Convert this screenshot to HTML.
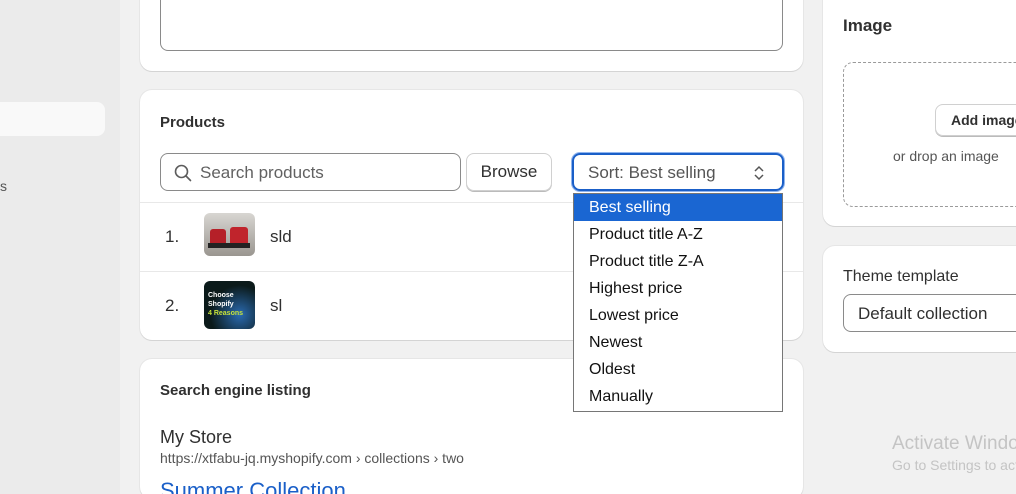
<!DOCTYPE html>
<html style="width:1016px;height:494px;overflow:hidden"><head><style>
*{box-sizing:border-box;margin:0;padding:0}
body{width:1016px;height:494px;overflow:hidden;background:#f1f1f1;font-family:"Liberation Sans",sans-serif;color:#303030;position:relative}
.side{position:absolute;left:0;top:0;width:120px;height:494px;background:#ebebeb}
.card{position:absolute;background:#fff;border-radius:12px;box-shadow:0 1px 0 #d4d4d4,0 0 0 1px #e6e6e6}
.abs{position:absolute}
</style></head><body>
<div class="side">
<div class="abs" style="left:0;top:102px;width:105px;height:34px;background:#f9f9f9;border-radius:0 8px 8px 0"></div>
<div class="abs" style="left:0;top:178px;font-size:14px;color:#555">s</div>
</div>
<div class="card" style="left:140px;top:-12px;width:663px;height:83px">
<div class="abs" style="left:20px;top:0;width:623px;height:63px;border:1px solid #8a8a8a;border-top:none;border-radius:0 0 8px 8px"></div>
</div>
<div class="card" style="left:140px;top:90px;width:663px;height:250px;overflow:visible">
<div class="abs" style="left:20px;top:24px;font-size:15px;font-weight:bold">Products</div>
<div class="abs" style="left:20px;top:63px;width:301px;height:38px;border:1px solid #8a8a8a;border-radius:8px"></div>
<svg class="abs" style="left:33px;top:73px" width="20" height="20" viewBox="0 0 20 20"><circle cx="8.5" cy="8.5" r="6" fill="none" stroke="#5c5c5c" stroke-width="1.6"/><path d="M13 13l4.5 4.5" stroke="#5c5c5c" stroke-width="1.6" stroke-linecap="round"/></svg>
<div class="abs" style="left:60px;top:73px;font-size:17px;color:#616161">Search products</div>
<div class="abs" style="left:326px;top:63px;width:86px;height:38px;border:1px solid #d0d0d0;border-radius:8px;box-shadow:0 1px 0 #bbb;font-size:17px;text-align:center;line-height:36px">Browse</div>
<div class="abs" style="left:432px;top:63px;width:212px;height:38px;border:2px solid #1a5fc8;border-radius:8px;box-shadow:0 0 0 1px #8fb4ee"></div>
<div class="abs" style="left:448px;top:73px;font-size:17px;color:#555">Sort: Best selling</div>
<svg class="abs" style="left:612px;top:73px" width="14" height="20" viewBox="0 0 14 20"><path d="M3 8l4-4 4 4M3 12l4 4 4-4" fill="none" stroke="#555" stroke-width="1.5"/></svg>
<div class="abs" style="left:0;top:112px;width:663px;border-top:1px solid #e8e8e8"></div>
<div class="abs" style="left:0;top:181px;width:663px;border-top:1px solid #e8e8e8"></div>
<div class="abs" style="left:25px;top:137px;font-size:17px">1.</div>
<div class="abs" style="left:25px;top:206px;font-size:17px">2.</div>
<div class="abs" style="left:64px;top:123px;width:51px;height:43px;border-radius:6px;background:linear-gradient(#d8d6d2,#9a9690);overflow:hidden"><div class="abs" style="left:6px;top:16px;width:16px;height:18px;background:#b52028;border-radius:3px"></div><div class="abs" style="left:26px;top:14px;width:18px;height:20px;background:#c0242c;border-radius:3px"></div><div class="abs" style="left:4px;top:30px;width:42px;height:5px;background:#222"></div></div>
<div class="abs" style="left:64px;top:191px;width:51px;height:48px;border-radius:6px;background:radial-gradient(circle at 70% 70%,#2a6ab0,#0b1a1a 60%);overflow:hidden;color:#fff;font-size:7px;font-weight:bold;line-height:9px;padding:10px 4px">Choose Shopify<br><span style="color:#c6e23a">4 Reasons</span></div>
<div class="abs" style="left:130px;top:137px;font-size:17px">sld</div>
<div class="abs" style="left:130px;top:206px;font-size:17px">sl</div>
</div>
<div class="card" style="left:140px;top:359px;width:663px;height:140px">
<div class="abs" style="left:20px;top:23px;font-size:15px;font-weight:bold">Search engine listing</div>
<div class="abs" style="left:20px;top:68px;font-size:18px;color:#303030">My Store</div>
<div class="abs" style="left:20px;top:91px;font-size:14px;color:#555">https://xtfabu-jq.myshopify.com › collections › two</div>
<div class="abs" style="left:20px;top:119px;font-size:22px;color:#1a5fc8">Summer Collection</div>
</div>
<div class="abs" style="left:573px;top:193px;width:210px;height:219px;background:#fff;border:1px solid #767676;font-size:16px;color:#111">
<div style="background:#1a66d2;color:#fff;height:27px;line-height:27px;padding-left:15px">Best selling</div>
<div style="height:27px;line-height:27px;padding-left:15px">Product title A-Z</div>
<div style="height:27px;line-height:27px;padding-left:15px">Product title Z-A</div>
<div style="height:27px;line-height:27px;padding-left:15px">Highest price</div>
<div style="height:27px;line-height:27px;padding-left:15px">Lowest price</div>
<div style="height:27px;line-height:27px;padding-left:15px">Newest</div>
<div style="height:27px;line-height:27px;padding-left:15px">Oldest</div>
<div style="height:27px;line-height:27px;padding-left:15px">Manually</div>
</div>
<div class="card" style="left:823px;top:-12px;width:220px;height:238px">
<div class="abs" style="left:20px;top:28px;font-size:17px;font-weight:bold">Image</div>
<div class="abs" style="left:20px;top:74px;width:200px;height:145px;border:1px dashed #9a9a9a;border-radius:10px"></div>
<div class="abs" style="left:112px;top:116px;width:110px;height:32px;border:1px solid #d0d0d0;border-radius:8px;box-shadow:0 1px 0 #bbb;font-size:14px;font-weight:bold;padding:7px 15px;white-space:nowrap">Add image</div>
<div class="abs" style="left:70px;top:160px;font-size:14px;color:#555;white-space:nowrap">or drop an image</div>
</div>
<div class="card" style="left:823px;top:246px;width:220px;height:106px">
<div class="abs" style="left:20px;top:22px;font-size:16px">Theme template</div>
<div class="abs" style="left:20px;top:48px;width:210px;height:38px;border:1px solid #8a8a8a;border-radius:8px;font-size:17px;padding:9px 14px">Default collection</div>
</div>
<div class="abs" style="left:892px;top:433px;font-size:19px;color:#c4c4c4;white-space:nowrap">Activate Windows</div>
<div class="abs" style="left:892px;top:457px;font-size:14px;color:#c4c4c4;white-space:nowrap">Go to Settings to activate</div>
</body></html>
